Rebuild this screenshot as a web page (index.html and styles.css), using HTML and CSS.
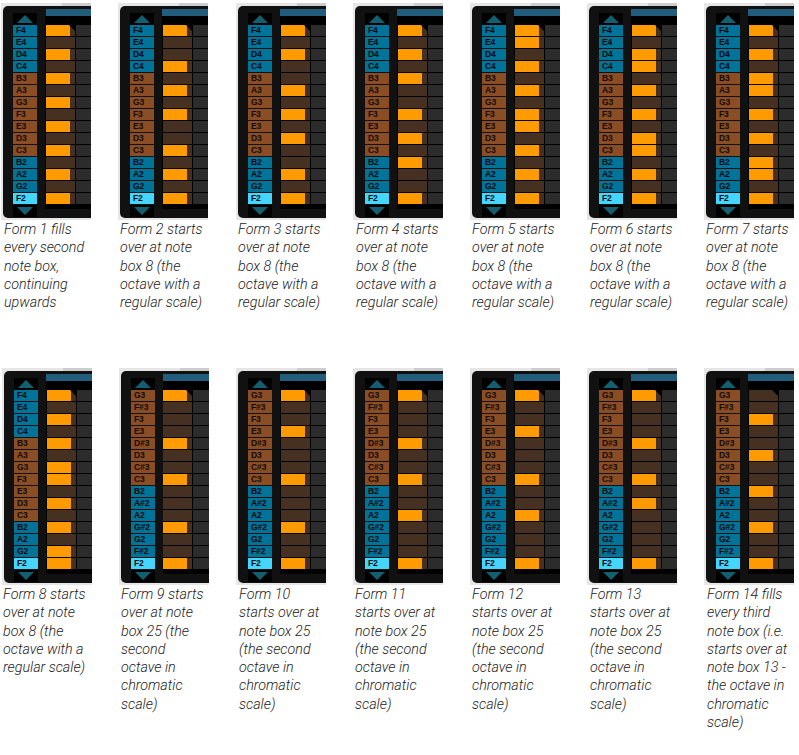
FILE: index.html
```html
<!DOCTYPE html>
<html lang="en">
<head>
<meta charset="utf-8">
<title>Forms</title>
<link rel="stylesheet" href="styles.css">
</head>
<body>
<div class="row row-top">
<figure class="fig">
<div class="shot"><div class="dark"><div class="nav"><div class="up"></div>
<div class="keys"><i class="bl">F4</i><i class="bl">E4</i><i class="bl">D4</i><i class="bl">C4</i><i>B3</i><i>A3</i><i>G3</i><i>F3</i><i>E3</i><i>D3</i><i>C3</i><i class="bl">B2</i><i class="bl">A2</i><i class="bl">G2</i><i class="root">F2</i></div>
<div class="down"></div></div>
<div class="grid shift-bar"><div class="bar"></div><div class="body"><div class="notes"><b></b><i></i><b></b><i></i><b></b><i></i><b></b><i></i><b></b><i></i><b></b><i></i><b></b><i></i><b></b></div><div class="cells"></div></div></div></div></div>
<figcaption class="cap-r1">Form 1 fills<br>every second<br>note box,<br>continuing<br>upwards</figcaption>
</figure>
<figure class="fig wide">
<div class="shot"><div class="dark"><div class="nav"><div class="up"></div>
<div class="keys"><i class="bl">F4</i><i class="bl">E4</i><i class="bl">D4</i><i class="bl">C4</i><i>B3</i><i>A3</i><i>G3</i><i>F3</i><i>E3</i><i>D3</i><i>C3</i><i class="bl">B2</i><i class="bl">A2</i><i class="bl">G2</i><i class="root">F2</i></div>
<div class="down"></div></div>
<div class="grid"><div class="bar"></div><div class="body"><div class="notes"><b></b><i></i><i></i><b></b><i></i><b></b><i></i><b></b><i></i><i></i><b></b><i></i><b></b><i></i><b></b></div><div class="cells"></div></div></div></div></div>
<figcaption>Form 2 starts<br>over at note<br>box 8 (the<br>octave with a<br>regular scale)</figcaption>
</figure>
<figure class="fig">
<div class="shot"><div class="dark"><div class="nav"><div class="up"></div>
<div class="keys"><i class="bl">F4</i><i class="bl">E4</i><i class="bl">D4</i><i class="bl">C4</i><i>B3</i><i>A3</i><i>G3</i><i>F3</i><i>E3</i><i>D3</i><i>C3</i><i class="bl">B2</i><i class="bl">A2</i><i class="bl">G2</i><i class="root">F2</i></div>
<div class="down"></div></div>
<div class="grid"><div class="bar"></div><div class="body"><div class="notes"><b></b><i></i><b></b><i></i><i></i><b></b><i></i><b></b><i></i><b></b><i></i><i></i><b></b><i></i><b></b></div><div class="cells"></div></div></div></div></div>
<figcaption>Form 3 starts<br>over at note<br>box 8 (the<br>octave with a<br>regular scale)</figcaption>
</figure>
<figure class="fig">
<div class="shot"><div class="dark"><div class="nav"><div class="up"></div>
<div class="keys"><i class="bl">F4</i><i class="bl">E4</i><i class="bl">D4</i><i class="bl">C4</i><i>B3</i><i>A3</i><i>G3</i><i>F3</i><i>E3</i><i>D3</i><i>C3</i><i class="bl">B2</i><i class="bl">A2</i><i class="bl">G2</i><i class="root">F2</i></div>
<div class="down"></div></div>
<div class="grid"><div class="bar"></div><div class="body"><div class="notes"><b></b><i></i><b></b><i></i><b></b><i></i><i></i><b></b><i></i><b></b><i></i><b></b><i></i><i></i><b></b></div><div class="cells"></div></div></div></div></div>
<figcaption class="cap-r1">Form 4 starts<br>over at note<br>box 8 (the<br>octave with a<br>regular scale)</figcaption>
</figure>
<figure class="fig">
<div class="shot"><div class="dark"><div class="nav"><div class="up"></div>
<div class="keys"><i class="bl">F4</i><i class="bl">E4</i><i class="bl">D4</i><i class="bl">C4</i><i>B3</i><i>A3</i><i>G3</i><i>F3</i><i>E3</i><i>D3</i><i>C3</i><i class="bl">B2</i><i class="bl">A2</i><i class="bl">G2</i><i class="root">F2</i></div>
<div class="down"></div></div>
<div class="grid"><div class="bar"></div><div class="body"><div class="notes"><b></b><b></b><i></i><b></b><i></i><b></b><i></i><b></b><b></b><i></i><b></b><i></i><b></b><i></i><b></b></div><div class="cells"></div></div></div></div></div>
<figcaption>Form 5 starts<br>over at note<br>box 8 (the<br>octave with a<br>regular scale)</figcaption>
</figure>
<figure class="fig">
<div class="shot"><div class="dark"><div class="nav"><div class="up"></div>
<div class="keys"><i class="bl">F4</i><i class="bl">E4</i><i class="bl">D4</i><i class="bl">C4</i><i>B3</i><i>A3</i><i>G3</i><i>F3</i><i>E3</i><i>D3</i><i>C3</i><i class="bl">B2</i><i class="bl">A2</i><i class="bl">G2</i><i class="root">F2</i></div>
<div class="down"></div></div>
<div class="grid"><div class="bar"></div><div class="body"><div class="notes"><b></b><i></i><b></b><b></b><i></i><b></b><i></i><b></b><i></i><b></b><b></b><i></i><b></b><i></i><b></b></div><div class="cells"></div></div></div></div></div>
<figcaption class="cap-r1">Form 6 starts<br>over at note<br>box 8 (the<br>octave with a<br>regular scale)</figcaption>
</figure>
<figure class="fig">
<div class="shot"><div class="dark"><div class="nav"><div class="up"></div>
<div class="keys"><i class="bl">F4</i><i class="bl">E4</i><i class="bl">D4</i><i class="bl">C4</i><i>B3</i><i>A3</i><i>G3</i><i>F3</i><i>E3</i><i>D3</i><i>C3</i><i class="bl">B2</i><i class="bl">A2</i><i class="bl">G2</i><i class="root">F2</i></div>
<div class="down"></div></div>
<div class="grid"><div class="bar"></div><div class="body"><div class="notes"><b></b><i></i><b></b><i></i><b></b><b></b><i></i><b></b><i></i><b></b><i></i><b></b><b></b><i></i><b></b></div><div class="cells"></div></div></div></div></div>
<figcaption>Form 7 starts<br>over at note<br>box 8 (the<br>octave with a<br>regular scale)</figcaption>
</figure>
</div>
<div class="row row-bottom">
<figure class="fig">
<div class="shot"><div class="dark"><div class="nav"><div class="up"></div>
<div class="keys"><i class="bl">F4</i><i class="bl">E4</i><i class="bl">D4</i><i class="bl">C4</i><i>B3</i><i>A3</i><i>G3</i><i>F3</i><i>E3</i><i>D3</i><i>C3</i><i class="bl">B2</i><i class="bl">A2</i><i class="bl">G2</i><i class="root">F2</i></div>
<div class="down"></div></div>
<div class="grid"><div class="bar"></div><div class="body"><div class="notes"><b></b><i></i><b></b><i></i><b></b><i></i><b></b><b></b><i></i><b></b><i></i><b></b><i></i><b></b><b></b></div><div class="cells"></div></div></div></div></div>
<figcaption class="cap-l1">Form 8 starts<br>over at note<br>box 8 (the<br>octave with a<br>regular scale)</figcaption>
</figure>
<figure class="fig">
<div class="shot"><div class="dark"><div class="nav"><div class="up"></div>
<div class="keys"><i>G3</i><i>F#3</i><i>F3</i><i>E3</i><i>D#3</i><i>D3</i><i>C#3</i><i>C3</i><i class="bl">B2</i><i class="bl">A#2</i><i class="bl">A2</i><i class="bl">G#2</i><i class="bl">G2</i><i class="bl">F#2</i><i class="root">F2</i></div>
<div class="down"></div></div>
<div class="grid flush"><div class="bar"></div><div class="body"><div class="notes"><b></b><i></i><i></i><i></i><b></b><i></i><i></i><b></b><i></i><i></i><i></i><b></b><i></i><i></i><b></b></div><div class="cells"></div></div></div></div></div>
<figcaption>Form 9 starts<br>over at note<br>box 25 (the<br>second<br>octave in<br>chromatic<br>scale)</figcaption>
</figure>
<figure class="fig">
<div class="shot"><div class="dark"><div class="nav"><div class="up"></div>
<div class="keys"><i>G3</i><i>F#3</i><i>F3</i><i>E3</i><i>D#3</i><i>D3</i><i>C#3</i><i>C3</i><i class="bl">B2</i><i class="bl">A#2</i><i class="bl">A2</i><i class="bl">G#2</i><i class="bl">G2</i><i class="bl">F#2</i><i class="root">F2</i></div>
<div class="down"></div></div>
<div class="grid"><div class="bar"></div><div class="body"><div class="notes"><b></b><i></i><i></i><b></b><i></i><i></i><i></i><b></b><i></i><i></i><i></i><b></b><i></i><i></i><b></b></div><div class="cells"></div></div></div></div></div>
<figcaption class="cap-r1">Form 10<br>starts over at<br>note box 25<br>(the second<br>octave in<br>chromatic<br>scale)</figcaption>
</figure>
<figure class="fig">
<div class="shot"><div class="dark"><div class="nav"><div class="up"></div>
<div class="keys"><i>G3</i><i>F#3</i><i>F3</i><i>E3</i><i>D#3</i><i>D3</i><i>C#3</i><i>C3</i><i class="bl">B2</i><i class="bl">A#2</i><i class="bl">A2</i><i class="bl">G#2</i><i class="bl">G2</i><i class="bl">F#2</i><i class="root">F2</i></div>
<div class="down"></div></div>
<div class="grid"><div class="bar"></div><div class="body"><div class="notes"><b></b><i></i><i></i><i></i><b></b><i></i><i></i><b></b><i></i><i></i><b></b><i></i><i></i><i></i><b></b></div><div class="cells"></div></div></div></div></div>
<figcaption>Form 11<br>starts over at<br>note box 25<br>(the second<br>octave in<br>chromatic<br>scale)</figcaption>
</figure>
<figure class="fig">
<div class="shot"><div class="dark"><div class="nav"><div class="up"></div>
<div class="keys"><i>G3</i><i>F#3</i><i>F3</i><i>E3</i><i>D#3</i><i>D3</i><i>C#3</i><i>C3</i><i class="bl">B2</i><i class="bl">A#2</i><i class="bl">A2</i><i class="bl">G#2</i><i class="bl">G2</i><i class="bl">F#2</i><i class="root">F2</i></div>
<div class="down"></div></div>
<div class="grid"><div class="bar"></div><div class="body"><div class="notes"><b></b><i></i><i></i><b></b><i></i><i></i><i></i><b></b><i></i><i></i><b></b><i></i><i></i><i></i><b></b></div><div class="cells"></div></div></div></div></div>
<figcaption>Form 12<br>starts over at<br>note box 25<br>(the second<br>octave in<br>chromatic<br>scale)</figcaption>
</figure>
<figure class="fig">
<div class="shot"><div class="dark"><div class="nav"><div class="up"></div>
<div class="keys"><i>G3</i><i>F#3</i><i>F3</i><i>E3</i><i>D#3</i><i>D3</i><i>C#3</i><i>C3</i><i class="bl">B2</i><i class="bl">A#2</i><i class="bl">A2</i><i class="bl">G#2</i><i class="bl">G2</i><i class="bl">F#2</i><i class="root">F2</i></div>
<div class="down"></div></div>
<div class="grid"><div class="bar"></div><div class="body"><div class="notes"><b></b><i></i><i></i><i></i><b></b><i></i><i></i><b></b><i></i><b></b><i></i><i></i><i></i><i></i><b></b></div><div class="cells"></div></div></div></div></div>
<figcaption class="cap-r1">Form 13<br>starts over at<br>note box 25<br>(the second<br>octave in<br>chromatic<br>scale)</figcaption>
</figure>
<figure class="fig">
<div class="shot"><div class="dark"><div class="nav"><div class="up"></div>
<div class="keys"><i>G3</i><i>F#3</i><i>F3</i><i>E3</i><i>D#3</i><i>D3</i><i>C#3</i><i>C3</i><i class="bl">B2</i><i class="bl">A#2</i><i class="bl">A2</i><i class="bl">G#2</i><i class="bl">G2</i><i class="bl">F#2</i><i class="root">F2</i></div>
<div class="down"></div></div>
<div class="grid"><div class="bar"></div><div class="body"><div class="notes"><i></i><i></i><b></b><i></i><i></i><b></b><i></i><i></i><b></b><i></i><i></i><b></b><i></i><i></i><b></b></div><div class="cells"></div></div></div></div></div>
<figcaption class="cap-r1">Form 14 fills<br>every third<br>note box (i.e.<br>starts over at<br>note box 13 -<br>the octave in<br>chromatic<br>scale)</figcaption>
</figure>
</div>
</body>
</html>
```
FILE: styles.css
```css
html, body {
  margin: 0;
  padding: 0;
  background: #fff;
}

.row {
  display: flex;
  gap: 27px;
  align-items: flex-start;
}

.row-top {
  height: 365px;
  padding: 3px 0 0 1px;
  box-sizing: content-box;
}

.row-bottom {
  padding-left: 2px;
}

.fig {
  margin: 0;
  width: 90px;
  flex: none;
}

.fig.wide {
  margin-right: 1px;
}

.shot {
  height: 217px;
  padding: 3px 0 2px 2px;
  box-sizing: border-box;
  background: linear-gradient(#cdcdcd, #cdcdcd) 61px 0 / 100% 3px no-repeat, #e6e6e6;
  overflow: hidden;
}

.dark {
  height: 212px;
  padding-left: 10px;
  display: flex;
  background: #111;
  border-radius: 5px 0 0 5px;
}

.nav {
  width: 24px;
  flex: none;
  padding-top: 7px;
}

.up,
.down {
  height: 12px;
  background: #000;
  position: relative;
}

.up::after,
.down::after {
  content: "";
  position: absolute;
  left: 4px;
  width: 0;
  height: 0;
  border-left: 8px solid transparent;
  border-right: 8px solid transparent;
}

.up::after {
  top: 2px;
  border-bottom: 8px solid #135f6f;
}

.down::after {
  top: 2px;
  border-top: 8px solid #135f6f;
}

.keys i {
  display: block;
  height: 11px;
  margin-bottom: 1px;
  padding-left: 3px;
  background: #8b4d24;
  color: #120b06;
  font: bold 8.5px/11px "Liberation Sans", Arial, sans-serif;
  letter-spacing: -0.1px;
}

.keys i.bl {
  background: #007399;
  color: #02090d;
}

.keys i.root {
  background: #45d6ff;
  color: #02090d;
}

.grid {
  margin-left: 8px;
  flex: 1;
  padding-top: 3px;
  min-width: 0;
}

.bar {
  height: 7px;
  background: #225d7b;
}

.shift-bar .bar {
  margin-left: 1px;
}

.body {
  height: 193px;
  background: #000;
  padding: 9px 0 0 1px;
  box-sizing: border-box;
  display: flex;
  gap: 1px;
}

.flush .body {
  padding-left: 0;
}

.notes {
  width: 29px;
  flex: none;
  position: relative;
}

.notes::after {
  content: "";
  position: absolute;
  top: 0;
  right: 0;
  width: 0;
  height: 0;
  border-top: 6px solid #000;
  border-left: 6px solid transparent;
}

.notes i,
.notes b {
  display: block;
  height: 11px;
  margin-bottom: 1px;
  background: #463022;
}

.notes b {
  background: linear-gradient(#ff9b00, #ff9b00) 0 0 / 24px 100% no-repeat, #463022;
}

.cells {
  flex: 1;
  height: 180px;
  background: repeating-linear-gradient(#2c2c2c 0 11px, #000 11px 12px);
}

figcaption {
  padding-left: 2px;
  font: italic 300 14.3px/18.25px Roboto, "Liberation Sans", Arial, sans-serif;
  color: #222;
  white-space: nowrap;
}

.cap-r1 {
  padding-left: 3px;
}

.cap-l1 {
  padding-left: 1px;
}
```
